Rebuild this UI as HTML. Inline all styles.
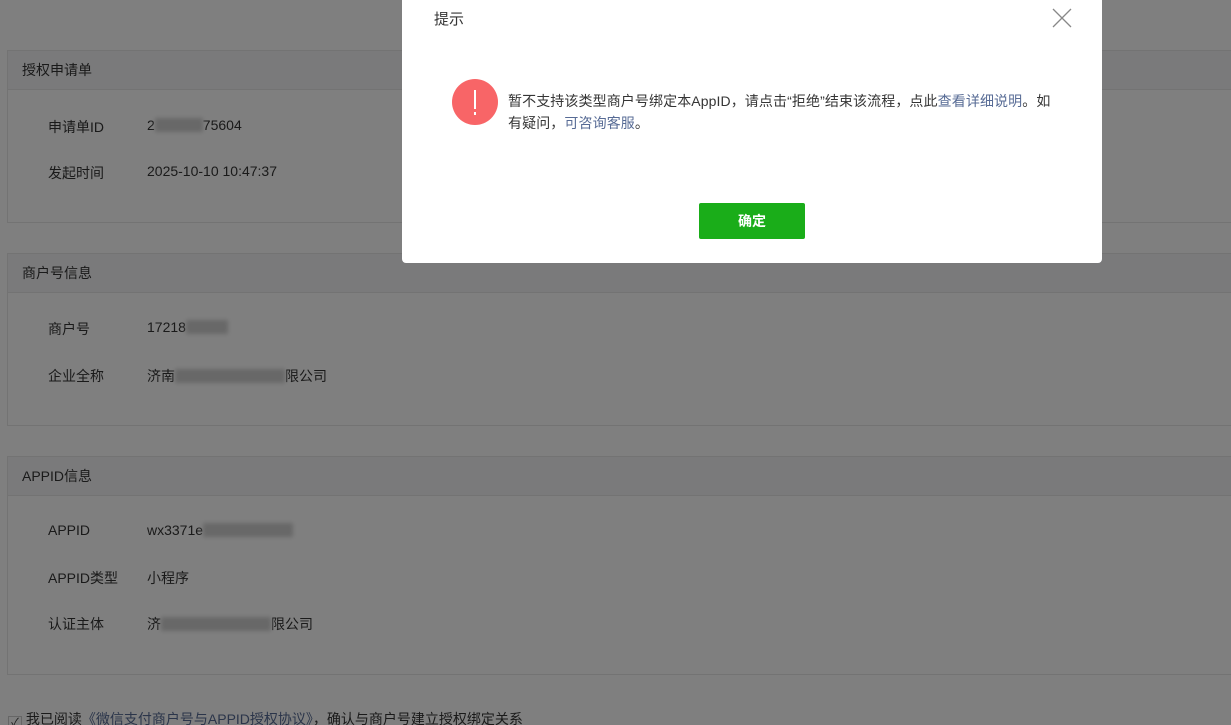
<!DOCTYPE html>
<html><head><meta charset="utf-8"><style>
*{margin:0;padding:0;box-sizing:border-box}
html{width:1231px;height:725px;overflow:hidden}
body{width:1231px;height:725px;overflow:hidden;background:#fefefe;font-family:"Liberation Sans","Noto Sans CJK SC",sans-serif;font-size:14px;color:#353535;position:relative}
.card{position:absolute;left:7px;width:1240px;border:1px solid #e6e6e6;background:#fff}
.hd{height:39px;background:#f4f5f7;border-bottom:1px solid #e6e6e6;line-height:38px;padding-left:14px;font-size:14px}
.row{position:absolute;left:40px;font-size:14px}
.row .v{position:absolute;left:99px;white-space:nowrap}
.blur{display:inline-block;background:#d0d0d0;height:14px;vertical-align:-2px;filter:blur(2px)}
.ov{position:fixed;left:0;top:0;width:1231px;height:725px;background:rgba(0,0,0,.5)}
.modal{position:absolute;left:402px;top:0;width:700px;height:263px;background:#fff;border-radius:0 0 4px 4px}
.ttl{position:absolute;left:32px;top:8px;font-size:15px;color:#353535}
.ic{position:absolute;left:50px;top:79px;width:46px;height:46px;border-radius:50%;background:#f86567}
.ic:after{content:"";position:absolute;left:22px;top:11px;width:2px;height:19px;background:#fff}
.ic:before{content:"";position:absolute;left:22px;top:33px;width:2px;height:3px;background:#fff}
.msg{position:absolute;left:106px;top:90px;width:548px;font-size:14px;line-height:22px;color:#353535;letter-spacing:0.1px}
.msg a{color:#576b95;text-decoration:none}
.btn{position:absolute;left:297px;top:203px;width:106px;height:36px;background:#1aad19;border-radius:2px;color:#fff;font-weight:bold;text-align:center;line-height:36px;font-size:14px}
</style></head><body>
<div class="card" style="top:50px;height:173px"><div class="hd">授权申请单</div>
<div class="row" style="top:66px">申请单ID<span class="v">2<span class="blur" style="width:48px"></span>75604</span></div>
<div class="row" style="top:112px">发起时间<span class="v">2025-10-10 10:47:37</span></div></div>
<div class="card" style="top:253px;height:173px"><div class="hd">商户号信息</div>
<div class="row" style="top:65px">商户号<span class="v">17218<span class="blur" style="width:42px"></span></span></div>
<div class="row" style="top:112px">企业全称<span class="v">济南<span class="blur" style="width:110px"></span>限公司</span></div></div>
<div class="card" style="top:456px;height:219px"><div class="hd">APPID信息</div>
<div class="row" style="top:65px">APPID<span class="v">wx3371e<span class="blur" style="width:90px"></span></span></div>
<div class="row" style="top:111px">APPID类型<span class="v">小程序</span></div>
<div class="row" style="top:157px">认证主体<span class="v">济<span class="blur" style="width:110px"></span>限公司</span></div></div>
<div style="position:absolute;left:8px;top:709px;font-size:14px;white-space:nowrap"><span style="display:inline-block;width:14px;height:14px;border:1px solid #ccc;vertical-align:-2px;font-size:11px;line-height:12px;text-align:center">✓</span> 我已阅读<span style="color:#576b95">《微信支付商户号与APPID授权协议》</span>，确认与商户号建立授权绑定关系</div>
<div class="ov"></div>
<div class="modal">
<div class="ttl">提示</div>
<svg style="position:absolute;left:650px;top:8px" width="20" height="20" viewBox="0 0 20 20"><path d="M1 1L19 19M19 1L1 19" stroke="#888" stroke-width="1.3"/></svg>
<div class="ic"></div>
<div class="msg">暂不支持该类型商户号绑定本AppID，请点击“拒绝”结束该流程，点此<a>查看详细说明</a>。如<br>有疑问，<a>可咨询客服</a>。</div>
<div class="btn">确定</div>
</div>
</body></html>
